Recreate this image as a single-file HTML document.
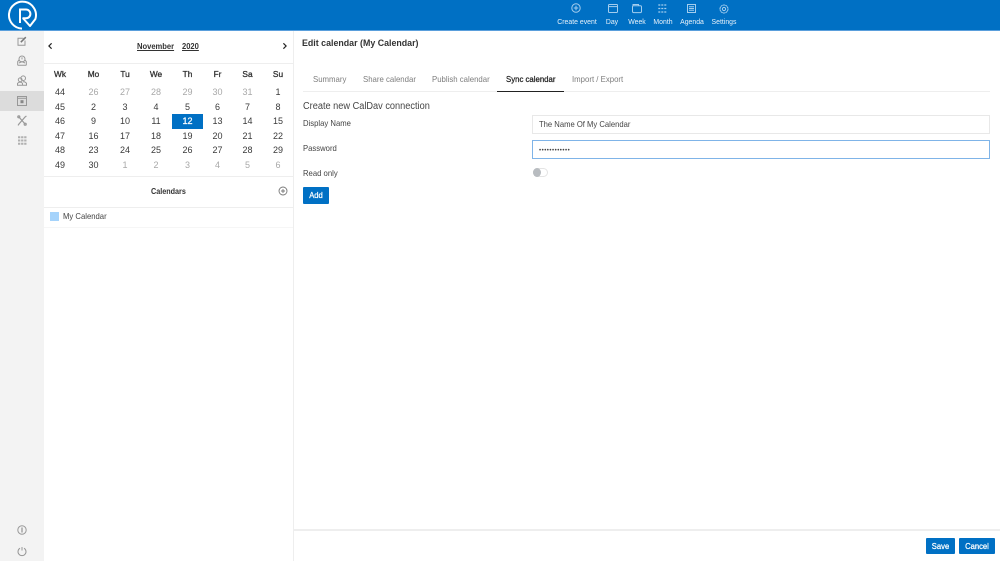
<!DOCTYPE html>
<html lang="en"><head><meta charset="utf-8"><title>Edit calendar</title>
<style>
*{box-sizing:border-box}
html,body{margin:0;padding:0;width:1000px;height:561px;overflow:hidden;background:#fff;font-family:"Liberation Sans",sans-serif;color:#222}
.a{position:absolute;white-space:nowrap}
.b{-webkit-text-stroke:.25px currentColor}
.sx{transform-origin:0 50%}
#top{position:absolute;left:0;top:0;width:1000px;height:31px;background:#0070c4;border-bottom:1px solid #5a9fdc}
#side{position:absolute;left:0;top:31px;width:44px;height:530px;background:#f3f3f3}
#sel{position:absolute;left:0;top:91px;width:44px;height:20px;background:#dcdcdc}
.nav{position:absolute;top:16.5px;font-size:7.6px;line-height:10px;color:#e6f1fa;white-space:nowrap;transform:translateX(-50%) scaleX(.908)}
svg{position:absolute;overflow:visible;fill:none}
.top svg{stroke:#a3cdee}
.r span{position:absolute;width:30px;margin-left:-15px;text-align:center;font-size:9px;line-height:12px;color:#3a3a3a}
.r{position:absolute;left:0;width:294px;height:12px}
.r span:nth-child(1){left:60px}.r span:nth-child(2){left:93.5px}.r span:nth-child(3){left:125px}.r span:nth-child(4){left:156px}.r span:nth-child(5){left:187.5px}.r span:nth-child(6){left:217.5px}.r span:nth-child(7){left:247.5px}.r span:nth-child(8){left:278px}
.r .g{color:#a8a8a8}
.h span{font-size:8.3px;color:#333;-webkit-text-stroke:.3px #333}
.line{position:absolute;background:#eeeeee}
.tab{position:absolute;top:73.5px;font-size:8.5px;line-height:11px;color:#7d7d7d;white-space:nowrap;transform:scaleX(.918);transform-origin:0 50%}
.lbl{position:absolute;left:303px;font-size:8.5px;line-height:11px;color:#444;white-space:nowrap;transform:scaleX(.906);transform-origin:0 50%}
.btn{position:absolute;background:#0070c4;color:#fff;text-align:center;border-radius:1px}
.btn span{display:block;font-size:8.3px;line-height:inherit;-webkit-text-stroke:.25px #fff;transform:scaleX(.92)}
.inp{position:absolute;left:532px;width:458px;border:1px solid #e8e8e8;background:#fff;font-size:8.5px;color:#444;padding-left:6px}
.inp span{display:block;line-height:inherit;white-space:nowrap;transform:scaleX(.9);transform-origin:0 50%}
.si{stroke:#989898;stroke-width:1}
</style></head><body>
<div id="top"></div>
<svg style="left:8px;top:1px" width="30" height="30" viewBox="0 0 30 30"><path d="M14 27.6A13.5 13.5 0 1 1 27.4 18L22 25 14.8 17" stroke="#fff" stroke-width="2" stroke-linejoin="round"/><path d="M12 22V8.5h6a4.4 4.4 0 0 1 0 8.8h-3.5" stroke="#fff" stroke-width="2"/></svg>

<div class="top">
<svg style="left:571px;top:3px" width="10" height="10" viewBox="0 0 10 10"><circle cx="5" cy="5" r="4.2"/><path d="M5 2.8v4.4M2.8 5h4.4"/></svg>
<svg style="left:607.5px;top:4px" width="10" height="9" viewBox="0 0 10 9"><rect x=".5" y=".5" width="9" height="8" rx=".7"/><path d="M.5 2.6h9"/></svg>
<svg style="left:632px;top:4px" width="10" height="9" viewBox="0 0 10 9"><rect x=".5" y="1.8" width="9" height="6.8" rx="1.2"/><path d="M1 1.6V.5h5.5v1"/></svg>
<svg style="left:658px;top:4px" width="9" height="9" viewBox="0 0 9 9"><path stroke-dasharray="2 1" stroke-width="1.2" d="M.3 1h8.4M.3 4.5h8.4M.3 8h8.4"/></svg>
<svg style="left:687px;top:4px" width="9" height="9" viewBox="0 0 9 9"><rect x=".5" y=".5" width="8" height="8"/><path d="M2 2.7h5M2 4.5h5M2 6.3h5"/></svg>
<svg style="left:719px;top:3.5px" width="10" height="10" viewBox="0 0 10 10"><circle cx="5" cy="5" r="4" stroke-dasharray="2.2 .3"/><circle cx="5" cy="5" r="1.6"/></svg>
</div>
<div class="nav" style="left:576.5px">Create event</div>
<div class="nav" style="left:612px">Day</div>
<div class="nav" style="left:637px">Week</div>
<div class="nav" style="left:663px">Month</div>
<div class="nav" style="left:692px">Agenda</div>
<div class="nav" style="left:724px">Settings</div>

<div id="side"></div><div id="sel"></div>
<svg class="si" style="left:17px;top:36px" width="10" height="10" viewBox="0 0 10 10"><path d="M6.5 2.2H1v7h7V4.5"/><path d="M3.8 6.2L8.8 1.2" stroke-width="1.5" stroke="#777"/></svg>
<svg class="si" style="left:17px;top:55px" width="10" height="11" viewBox="0 0 10 11"><path d="M.7 10.2V6.5L2 5M9.3 10.2V6.5L8 5M.7 10.2h8.6"/><circle cx="5" cy="4" r="3"/><path d="M5 2.4V4.4M2 8l3-1.5 3 1.5"/></svg>
<svg class="si" style="left:17px;top:75px" width="10" height="11" viewBox="0 0 10 11"><circle cx="6.2" cy="3.2" r="2.3"/><circle cx="3.2" cy="4.8" r="1.9"/><path d="M.5 10.2V8.4l1.6-1.2h2.2L5.5 8.4v1.8zM5.8 6.8h1.8l1.9 1.4v2H5.5"/></svg>
<svg class="si" style="left:17px;top:96px" width="10" height="10" viewBox="0 0 10 10"><rect x=".5" y=".5" width="9" height="9"/><path d="M.5 2.3h9"/><rect x="3.5" y="4.2" width="3" height="3" fill="#888" stroke="none"/></svg>
<svg class="si" style="left:17px;top:115px" width="10" height="11" viewBox="0 0 10 11"><path d="M1.5 1.5l7 8M8.5 1.5l-7 8" stroke-width="1.2"/><circle cx="1.8" cy="1.8" r="1.1"/><circle cx="8.2" cy="9.2" r="1.1"/><path d="M8.5 1l.8.8M1 9.5l.8.8" stroke-width="1.4"/></svg>
<svg class="si" style="left:18px;top:136px" width="9" height="9" viewBox="0 0 9 9"><path stroke-dasharray="2.3 .8" stroke="#b0b0b0" stroke-width="2" d="M0 1.2h9M0 4.5h9M0 7.8h9"/></svg>
<svg class="si" style="left:17px;top:525px" width="10" height="10" viewBox="0 0 10 10"><circle cx="5" cy="5" r="4.2"/><path d="M5 2.5v5" stroke-width="1.3"/></svg>
<svg class="si" style="left:17px;top:546px" width="10" height="10" viewBox="0 0 10 10"><path d="M3 2.2a4 4 0 1 0 4 0M5 1v3.5"/></svg>

<div class="line" style="left:293px;top:31px;width:1px;height:530px"></div>
<svg style="left:48px;top:43px" width="4" height="6" viewBox="0 0 4 6"><path d="M3.6.3L.9 3l2.7 2.7" stroke="#222" stroke-width="1.2"/></svg>
<svg style="left:283px;top:43px" width="4" height="6" viewBox="0 0 4 6"><path d="M.4.3L3.1 3 .4 5.7" stroke="#222" stroke-width="1.2"/></svg>
<div class="a sx" style="left:137px;top:41px;font-size:8.4px;line-height:11px;font-weight:bold;text-decoration:underline;color:#333;transform:scaleX(.905)">November</div>
<div class="a sx" style="left:182px;top:41px;font-size:8.4px;line-height:11px;font-weight:bold;text-decoration:underline;color:#333;transform:scaleX(.905)">2020</div>
<div class="line" style="left:44px;top:63px;width:249px;height:1px"></div>

<div class="r h" style="top:68px"><span>Wk</span><span>Mo</span><span>Tu</span><span>We</span><span>Th</span><span>Fr</span><span>Sa</span><span>Su</span></div>
<div class="a" style="left:172px;top:114px;width:31px;height:15px;background:#0070c4"></div>
<div class="r" style="top:86px"><span>44</span><span class="g">26</span><span class="g">27</span><span class="g">28</span><span class="g">29</span><span class="g">30</span><span class="g">31</span><span>1</span></div>
<div class="r" style="top:101px"><span>45</span><span>2</span><span>3</span><span>4</span><span>5</span><span>6</span><span>7</span><span>8</span></div>
<div class="r" style="top:115px"><span>46</span><span>9</span><span>10</span><span>11</span><span style="color:#fff;-webkit-text-stroke:.25px #fff">12</span><span>13</span><span>14</span><span>15</span></div>
<div class="r" style="top:130px"><span>47</span><span>16</span><span>17</span><span>18</span><span>19</span><span>20</span><span>21</span><span>22</span></div>
<div class="r" style="top:144px"><span>48</span><span>23</span><span>24</span><span>25</span><span>26</span><span>27</span><span>28</span><span>29</span></div>
<div class="r" style="top:159px"><span>49</span><span>30</span><span class="g">1</span><span class="g">2</span><span class="g">3</span><span class="g">4</span><span class="g">5</span><span class="g">6</span></div>

<div class="line" style="left:44px;top:175.5px;width:249px;height:1.5px"></div>
<div class="a sx" style="left:151px;top:186px;font-size:8.2px;line-height:11px;font-weight:bold;color:#333;transform:scaleX(.88)">Calendars</div>
<svg style="left:278px;top:186px" width="10" height="10" viewBox="0 0 10 10"><circle cx="5" cy="5" r="4" stroke="#777" stroke-width=".9"/><path d="M5 3v4M3 5h4" stroke="#777" stroke-width=".9"/></svg>
<div class="line" style="left:44px;top:207px;width:249px;height:1px"></div>
<div class="a" style="left:50px;top:212px;width:8.5px;height:9px;background:#a5d3fb"></div>
<div class="a sx" style="left:63px;top:211px;font-size:8.5px;line-height:11px;color:#444;transform:scaleX(.906)">My Calendar</div>
<div class="line" style="left:44px;top:227px;width:249px;height:1px;background:#f6f6f6"></div>

<div class="a sx" style="left:301.5px;top:37.5px;font-size:9.6px;line-height:12px;font-weight:bold;color:#333;transform:scaleX(.922)">Edit calendar (My Calendar)</div>
<div class="tab" style="left:312.5px">Summary</div>
<div class="tab" style="left:363px">Share calendar</div>
<div class="tab" style="left:431.5px">Publish calendar</div>
<div class="tab b" style="left:506px;color:#222">Sync calendar</div>
<div class="tab" style="left:572px">Import / Export</div>
<div class="line" style="left:303px;top:91px;width:687px;height:1px"></div>
<div class="a" style="left:497px;top:90.5px;width:67px;height:1.5px;background:#222"></div>
<div class="a sx" style="left:303px;top:100px;font-size:10px;line-height:13px;color:#444;transform:scaleX(.92)">Create new CalDav connection</div>
<div class="lbl" style="top:118px">Display Name</div>
<div class="lbl" style="top:143px">Password</div>
<div class="lbl" style="top:168px">Read only</div>
<div class="inp" style="top:115px;height:19px;line-height:17px"><span>The Name Of My Calendar</span></div>
<div class="inp" style="top:140px;height:19px;line-height:20px;border-color:#7fb4e8;font-size:6px;letter-spacing:.5px">••••••••••••</div>
<div class="a" style="left:533px;top:168px;width:15px;height:9px;border:1px solid #e4e4e4;border-radius:5px"></div>
<div class="a" style="left:533px;top:168px;width:8px;height:9px;background:#b8bcc0;border-radius:50%"></div>
<div class="btn" style="left:303px;top:187px;width:26px;height:17px;line-height:17px"><span>Add</span></div>

<div class="line" style="left:294px;top:529px;width:706px;height:1.5px"></div>
<div class="btn" style="left:926px;top:538px;width:29px;height:16px;line-height:16px"><span>Save</span></div>
<div class="btn" style="left:959px;top:538px;width:36px;height:16px;line-height:16px"><span>Cancel</span></div>
</body></html>
